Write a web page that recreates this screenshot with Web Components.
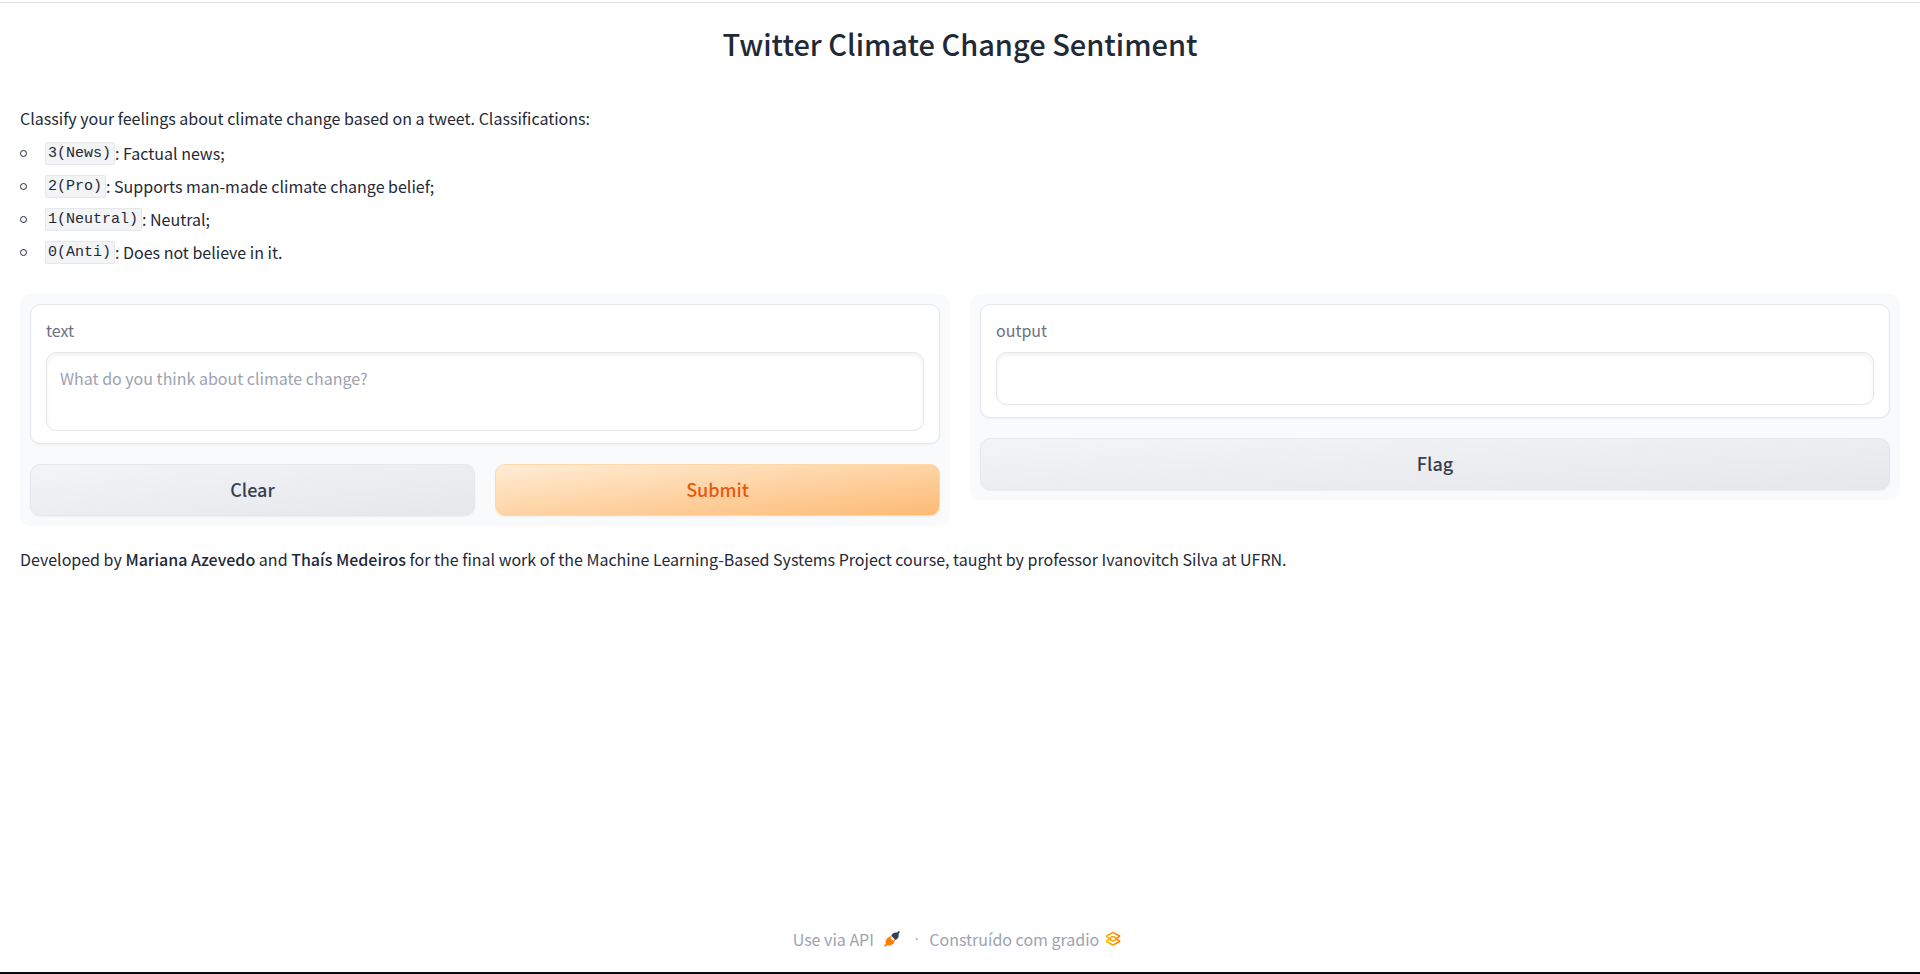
<!DOCTYPE html>
<html lang="en">
<head>
<meta charset="utf-8">
<meta name="viewport" content="width=device-width, initial-scale=1">
<title>Twitter Climate Change Sentiment</title>
<style>
  html, body { margin: 0; }
  body {
    font-family: "Noto Sans CJK SC", "Open Sans", sans-serif;
    font-size: 16px;
    line-height: 26px;
    color: #1f2937;
    background: #fff;
    --border: #e5e7eb;
    --panel: #f9fafb;
    --radius: 10px;
  }
</style>
</head>
<body>
<demo-app>
  <demo-intro heading="Twitter Climate Change Sentiment">
    Classify your feelings about climate change based on a tweet. Classifications:
    <class-item slot="item" code="3(News)">: Factual news;</class-item>
    <class-item slot="item" code="2(Pro)">: Supports man-made climate change belief;</class-item>
    <class-item slot="item" code="1(Neutral)">: Neutral;</class-item>
    <class-item slot="item" code="0(Anti)">: Does not believe in it.</class-item>
  </demo-intro>
  <demo-columns>
    <demo-panel>
      <text-field label="text" rows="2" placeholder="What do you think about climate change?"></text-field>
      <demo-button slot="actions">Clear</demo-button>
      <demo-button slot="actions" variant="primary">Submit</demo-button>
    </demo-panel>
    <demo-panel>
      <text-field label="output" rows="1" readonly></text-field>
      <demo-button slot="actions">Flag</demo-button>
    </demo-panel>
  </demo-columns>
  <demo-credits>Developed by <strong>Mariana Azevedo</strong> and <strong>Thaís Medeiros</strong> for the final work of the Machine Learning-Based Systems Project course, taught by professor Ivanovitch Silva at UFRN.</demo-credits>
  <demo-footer slot="footer"></demo-footer>
</demo-app>

<script>
  const define = (name, render) => customElements.define(name, class extends HTMLElement {
    connectedCallback() {
      if (this.shadowRoot) return;
      const template = document.createElement('template');
      template.innerHTML = render(this);
      this.attachShadow({ mode: 'open' }).append(template.content.cloneNode(true));
    }
  });

  define('demo-app', () => `
    <style>
      :host { display: flex; flex-direction: column; box-sizing: border-box; min-height: 100vh; padding-top: 2px; border-bottom: 2px solid #0b0b0f; }
      main { flex: 1; display: flex; flex-direction: column; gap: 20px; padding: 20px; border-top: 1px solid #e2e2e2; }
    </style>
    <main><slot></slot></main>
    <slot name="footer"></slot>`);

  define('demo-intro', el => `
    <style>
      :host { display: block; padding-bottom: 8px; }
      h1 { margin: 0 0 40px; font-size: 29px; line-height: 40px; font-weight: 500; text-align: center; }
      p { margin: 0; line-height: 30px; }
      div { margin-top: 6px; display: grid; gap: 5px; }
    </style>
    <h1>${el.getAttribute('heading')}</h1>
    <p><slot></slot></p>
    <div role="list"><slot name="item"></slot></div>`);

  define('class-item', el => {
    el.setAttribute('role', 'listitem');
    return `
    <style>
      :host { display: flex; align-items: center; line-height: 28px; }
      i { box-sizing: border-box; width: 7px; height: 7px; margin-right: 18px; border: 1px solid #1f2937; border-radius: 50%; }
      code { padding: 0 3px 0 2px; border: 1px solid var(--border); border-radius: 2px; background: #f3f4f6; font: 15px/21px "Liberation Mono", monospace; }
    </style>
    <i></i><code>${el.getAttribute('code')}</code><span><slot></slot></span>`;
  });

  define('demo-columns', () => `
    <style>
      :host { display: grid; grid-template-columns: 1fr 1fr; gap: 20px; align-items: start; }
      @media (max-width: 700px) { :host { grid-template-columns: 1fr; } }
    </style>
    <slot></slot>`);

  define('demo-panel', () => `
    <style>
      :host { display: flex; flex-direction: column; gap: 20px; padding: 10px; border-radius: var(--radius); background: var(--panel); }
      .actions { display: flex; gap: 20px; }
    </style>
    <slot></slot>
    <div class="actions"><slot name="actions"></slot></div>`);

  define('text-field', el => `
    <style>
      :host { display: block; padding: 12px 15px; border: 1px solid var(--border); border-radius: var(--radius); background: #fff; box-shadow: 0 1px 2px rgba(0,0,0,.05); }
      label { display: block; margin-bottom: 9px; line-height: 26px; color: #6b7280; }
      textarea { display: block; box-sizing: border-box; width: 100%; padding: 12px 13px 13px; border: 1px solid var(--border); border-radius: var(--radius); background: #fff; box-shadow: inset 0 2px 4px rgba(0,0,0,.06); color: inherit; font: inherit; resize: none; overflow: hidden; outline: none; }
      textarea::placeholder { color: #9ca3af; opacity: 1; }
    </style>
    <label for="box">${el.getAttribute('label')}</label>
    <textarea id="box" rows="${el.getAttribute('rows')}" placeholder="${el.getAttribute('placeholder') || ''}" ${el.hasAttribute('readonly') ? 'readonly' : ''}></textarea>`);

  define('demo-button', () => `
    <style>
      :host { display: block; flex: 1; }
      button { display: block; box-sizing: border-box; width: 100%; height: 52px; padding: 0 0 2px; border: 1px solid var(--border); border-radius: var(--radius); background: linear-gradient(to bottom right, #f3f4f6, #e5e7eb); box-shadow: 0 1px 2px rgba(0,0,0,.05); color: #374151; font: 500 18px/28px "Noto Sans CJK SC", "Open Sans", sans-serif; cursor: pointer; }
      :host([variant=primary]) button { border-color: #fed7aa; background: linear-gradient(to bottom right, #ffedd5, #fdba74); color: #ea580c; }
    </style>
    <button type="button"><slot></slot></button>`);

  define('demo-credits', () => `
    <style>
      :host { display: block; line-height: 26px; }
      ::slotted(strong) { font-weight: 500; }
    </style>
    <slot></slot>`);

  define('demo-footer', () => `
    <style>
      :host { display: flex; justify-content: center; align-items: center; padding: 0 6px 19px 0; line-height: 28px; color: #9ca3af; }
      a { display: flex; align-items: center; color: inherit; text-decoration: none; }
      svg { display: block; width: 16px; height: 16px; }
      .api svg { margin-left: 10px; }
      .built svg { margin-left: 6px; }
      .dot { margin: 0 10px 0 14px; font-family: "Liberation Sans", sans-serif; }
    </style>
    <a class="api" href="#api">Use via API
      <svg viewBox="0 0 16 16" aria-hidden="true">
        <path d="M.6 15.400 3.200 12.600" stroke="#ff7c00" stroke-width="1.600"/>
        <path d="M2.200 13.800C.700 10.500 2 7.300 5.200 6l5.200 5C9 14.200 5.600 15.300 2.200 13.800Z" fill="#ff7c00"/>
        <path d="m5.300 6.600 1.900-1M9.600 10.700l1-1.900" stroke="#ff7c00" stroke-width="1.300"/>
        <path d="M7.300 4.900C8.200 2 11.400.900 14.300 2c1.100 2.900 0 5.900-2.900 6.900Z" fill="#334155"/>
        <path d="m13.200 2.900 2.200-2.500" stroke="#334155" stroke-width="1.600"/>
      </svg>
    </a>
    <span class="dot">·</span>
    <a class="built" href="#gradio">Construído com gradio
      <svg viewBox="0 0 16 16" aria-hidden="true">
        <defs><linearGradient id="g" x1="0" x2="16" y1="0" y2="0" gradientUnits="userSpaceOnUse"><stop stop-color="#ffc100"/><stop offset="1" stop-color="#ff7c00"/></linearGradient></defs>
        <g fill="none" stroke="url(#g)" stroke-width="1.700" stroke-linejoin="round">
          <path d="M1 5.300 8 1.500 15 5.300M1 10.300 8 14.100 15 10.300"/>
          <path d="M1 5.300 8 9.600 15 5.300M1 10.300 8 6 15 10.300"/>
        </g>
        <ellipse cx="8" cy="7.800" rx="2.600" ry="2" fill="#fff" stroke="#ff9d00" stroke-width="1.400"/>
      </svg>
    </a>`);
</script>
</body>
</html>
